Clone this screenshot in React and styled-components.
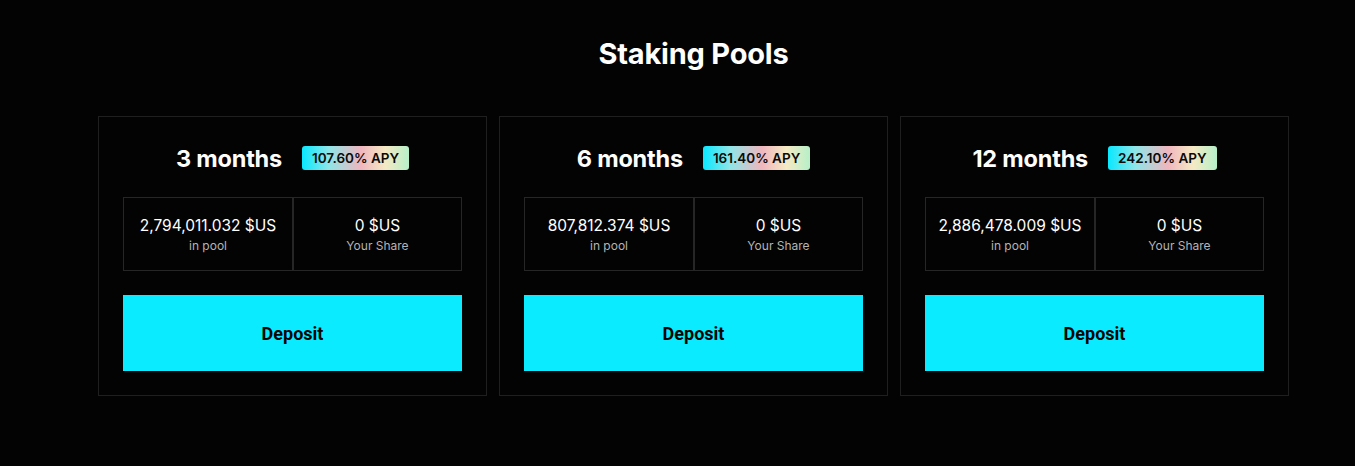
import React from "react";
import styled, { createGlobalStyle } from "styled-components";

const GlobalStyle = createGlobalStyle`
  html, body {
    margin: 0;
    padding: 0;
    background: #030303;
    font-family: Inter, "Noto Sans", sans-serif;
  }
`;

const Page = styled.div`
  width: 1355px;
  height: 466px;
  background: #030303;
  color: #fff;
  box-sizing: border-box;
  padding-top: 34px;
`;

const Heading = styled.h1`
  margin: 0 0 0 98px;
  width: 1191px;
  text-align: center;
  font-size: 29px;
  line-height: 40px;
  font-weight: 700;
  letter-spacing: -0.2px;
`;

const Grid = styled.div`
  display: grid;
  grid-template-columns: repeat(3, 389px);
  gap: 12px;
  margin: 42px 0 0 98px;
`;

const Card = styled.div`
  border: 1px solid #1f1f1f;
  padding: 24px;
  display: flex;
  flex-direction: column;
`;

const TitleRow = styled.div`
  display: flex;
  align-items: center;
  justify-content: center;
  gap: 20px;
  height: 34px;
`;

const Term = styled.span`
  font-size: 23.5px;
  font-weight: 700;
  letter-spacing: -0.2px;
`;

const Badge = styled.span`
  display: inline-flex;
  align-items: center;
  height: 24px;
  padding: 0 10px;
  border-radius: 3px;
  font-size: 13.5px;
  font-weight: 600;
  color: #0a0a0a;
  background: linear-gradient(90deg, #08e8ff 0%, #8ee6e8 25%, #f0b6bf 55%, #f5eac4 78%, #b6f0c8 100%);
`;

const Stats = styled.div`
  display: grid;
  grid-template-columns: 168px 1fr;
  margin-top: 22px;
  border: 1px solid #262626;
  height: 74px;
  box-sizing: border-box;
`;

const Stat = styled.div`
  display: flex;
  flex-direction: column;
  align-items: center;
  justify-content: center;
  padding-top: 2px;
  & + & {
    border-left: 2px solid #262626;
  }
`;

const Value = styled.span`
  font-size: 15.5px;
  line-height: 20px;
  font-weight: 400;
  color: #fff;
`;

const Label = styled.span`
  margin-top: 2px;
  font-size: 12px;
  line-height: 16px;
  color: #b4b4b4;
`;

const DepositButton = styled.button`
  margin-top: 24px;
  height: 76px;
  border: none;
  background: #0aebff;
  color: #050505;
  font-family: Roboto, Inter, sans-serif;
  font-size: 18px;
  font-weight: 700;
  cursor: pointer;
`;

const pools = [
  { term: "3 months", apy: "107.60% APY", pool: "2,794,011.032 $US" },
  { term: "6 months", apy: "161.40% APY", pool: "807,812.374 $US" },
  { term: "12 months", apy: "242.10% APY", pool: "2,886,478.009 $US" },
];

export default function App() {
  return (
    <>
      <GlobalStyle />
      <Page>
        <Heading>Staking Pools</Heading>
        <Grid>
          {pools.map((p) => (
            <Card key={p.term}>
              <TitleRow>
                <Term>{p.term}</Term>
                <Badge>{p.apy}</Badge>
              </TitleRow>
              <Stats>
                <Stat>
                  <Value>{p.pool}</Value>
                  <Label>in pool</Label>
                </Stat>
                <Stat>
                  <Value>0 $US</Value>
                  <Label>Your Share</Label>
                </Stat>
              </Stats>
              <DepositButton>Deposit</DepositButton>
            </Card>
          ))}
        </Grid>
      </Page>
    </>
  );
}
